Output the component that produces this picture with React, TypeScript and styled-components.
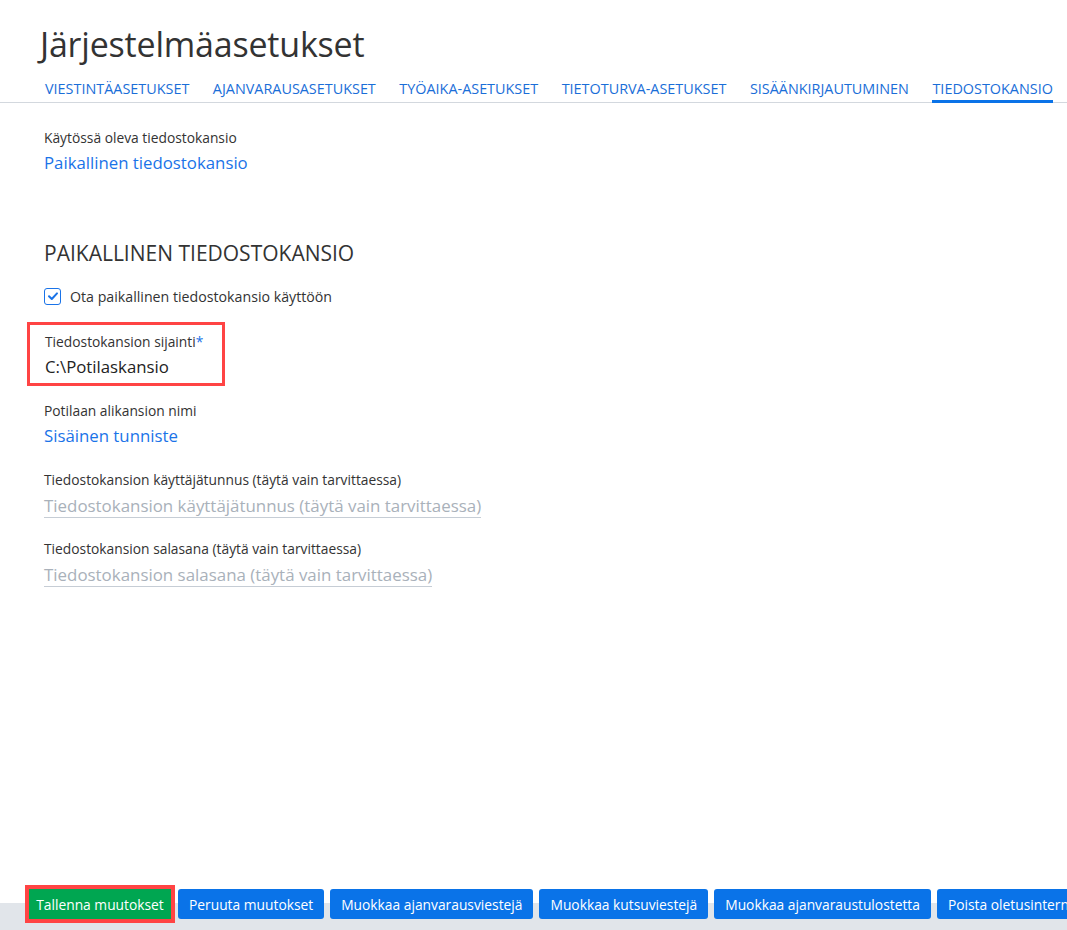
import styled, { createGlobalStyle } from "styled-components";

const GlobalStyle = createGlobalStyle`
  html, body {
    margin: 0;
    padding: 0;
    background: #ffffff;
    font-family: "Open Sans", "Noto Sans", sans-serif;
    color: #333333;
  }
`;

const tabs = [
  "Viestintäasetukset",
  "Ajanvarausasetukset",
  "Työaika-asetukset",
  "Tietoturva-asetukset",
  "Sisäänkirjautuminen",
  "Tiedostokansio",
];

const actions = [
  "Peruuta muutokset",
  "Muokkaa ajanvarausviestejä",
  "Muokkaa kutsuviestejä",
  "Muokkaa ajanvaraustulostetta",
  "Poista oletusinternetosoite",
];

const Page = styled.div`
  height: 930px;
  display: flex;
  flex-direction: column;
  overflow: hidden;
`;

const Title = styled.h1`
  margin: 0;
  padding: 22px 0 0 40px;
  font-size: 34px;
  font-weight: 400;
  line-height: 44px;
  color: #333;
  letter-spacing: -0.2px;
`;

const TabBar = styled.nav`
  display: flex;
  align-items: flex-start;
  gap: 23.5px;
  padding: 14px 0 0 45px;
  border-bottom: 1px solid #d3d8de;
  white-space: nowrap;
`;

const Tab = styled.div<{ $active?: boolean }>`
  font-size: 14.4px;
  text-transform: uppercase;
  color: #1a6ed8;
  line-height: 18px;
  padding-bottom: ${(p) => (p.$active ? "2px" : "4px")};
  border-bottom: ${(p) => (p.$active ? "3px solid #0a73e8" : "none")};
  margin-bottom: ${(p) => (p.$active ? "-1px" : "0")};
`;

const Content = styled.main`
  flex: 1;
  padding: 25px 0 0 44px;
`;

const Label = styled.div`
  font-size: 13.8px;
  line-height: 20px;
  color: #333;
`;

const Required = styled.span`
  color: #1a73e8;
`;

const LinkValue = styled.div`
  font-size: 16.8px;
  line-height: 30px;
  color: #1a73e8;
`;

const Field = styled.div<{ $gap?: number }>`
  margin-bottom: ${(p) => p.$gap ?? 19}px;
`;

const SectionTitle = styled.h2`
  margin: 62px 0 20px;
  font-size: 21px;
  font-weight: 400;
  line-height: 26px;
  color: #333;
`;

const CheckRow = styled.label`
  display: flex;
  align-items: center;
  gap: 9px;
  height: 20px;
  font-size: 14.2px;
  color: #333;
  margin-bottom: 16px;
`;

const CheckBox = styled.span`
  width: 15px;
  height: 15px;
  border: 1.5px solid #1a73e8;
  border-radius: 3px;
  display: flex;
  align-items: center;
  justify-content: center;
  background: #fff;
`;

const Highlight = styled.div`
  margin: 0 0 15px -17px;
  width: 177px;
  padding: 7px 0 1px 15px;
  border: 3px solid #ff4444;
`;

const PlainValue = styled.div`
  font-size: 16.8px;
  line-height: 30px;
  color: #222;
`;

const Placeholder = styled.div`
  display: inline-block;
  margin-top: 5px;
  font-size: 16.9px;
  line-height: 22px;
  color: #a9b1ba;
  border-bottom: 1px solid #c6cdd5;
`;

const Footer = styled.footer`
  display: flex;
  align-items: flex-start;
  gap: 6px;
  padding: 0 0 0 25px;
  height: 45px;
  white-space: nowrap;
  background: linear-gradient(to bottom, #ffffff 18px, #e1e5ea 18px);
`;

const Button = styled.button`
  height: 30px;
  padding: 0 11px;
  border: none;
  border-radius: 3px;
  font-family: "Open Sans", "Noto Sans", sans-serif;
  font-size: 13.8px;
  color: #fff;
  background: #0a73e8;
  flex-shrink: 0;
  margin-top: 4px;
`;

const SaveWrap = styled.div`
  border: 4px solid #ff4444;
  display: flex;
  margin-right: -3px;
`;

const SaveButton = styled(Button)`
  background: #00a651;
  border-radius: 0;
  margin: 0;
  width: 142px;
  padding: 0;
`;

function Check() {
  return (
    <svg width="12" height="12" viewBox="0 0 12 12">
      <path
        d="M2 6.2 L4.8 9 L10 3.4"
        fill="none"
        stroke="#1a73e8"
        strokeWidth="2"
        strokeLinecap="round"
        strokeLinejoin="round"
      />
    </svg>
  );
}

const App = () => {
  return (
    <>
      <GlobalStyle />
      <Page>
        <Title>Järjestelmäasetukset</Title>
        <TabBar>
          {tabs.map((t, i) => (
            <Tab key={t} $active={i === tabs.length - 1}>
              {t}
            </Tab>
          ))}
        </TabBar>
        <Content>
          <Field>
            <Label>Käytössä oleva tiedostokansio</Label>
            <LinkValue>Paikallinen tiedostokansio</LinkValue>
          </Field>
          <SectionTitle>PAIKALLINEN TIEDOSTOKANSIO</SectionTitle>
          <CheckRow>
            <CheckBox>
              <Check />
            </CheckBox>
            Ota paikallinen tiedostokansio käyttöön
          </CheckRow>
          <Highlight>
            <Label>
              Tiedostokansion sijainti<Required>*</Required>
            </Label>
            <PlainValue>C:\Potilaskansio</PlainValue>
          </Highlight>
          <Field>
            <Label>Potilaan alikansion nimi</Label>
            <LinkValue>Sisäinen tunniste</LinkValue>
          </Field>
          <Field $gap={21}>
            <Label>Tiedostokansion käyttäjätunnus (täytä vain tarvittaessa)</Label>
            <Placeholder>Tiedostokansion käyttäjätunnus (täytä vain tarvittaessa)</Placeholder>
          </Field>
          <Field>
            <Label>Tiedostokansion salasana (täytä vain tarvittaessa)</Label>
            <Placeholder>Tiedostokansion salasana (täytä vain tarvittaessa)</Placeholder>
          </Field>
        </Content>
        <Footer>
          <SaveWrap>
            <SaveButton>Tallenna muutokset</SaveButton>
          </SaveWrap>
          {actions.map((a) => (
            <Button key={a}>{a}</Button>
          ))}
        </Footer>
      </Page>
    </>
  );
};

export default App;
